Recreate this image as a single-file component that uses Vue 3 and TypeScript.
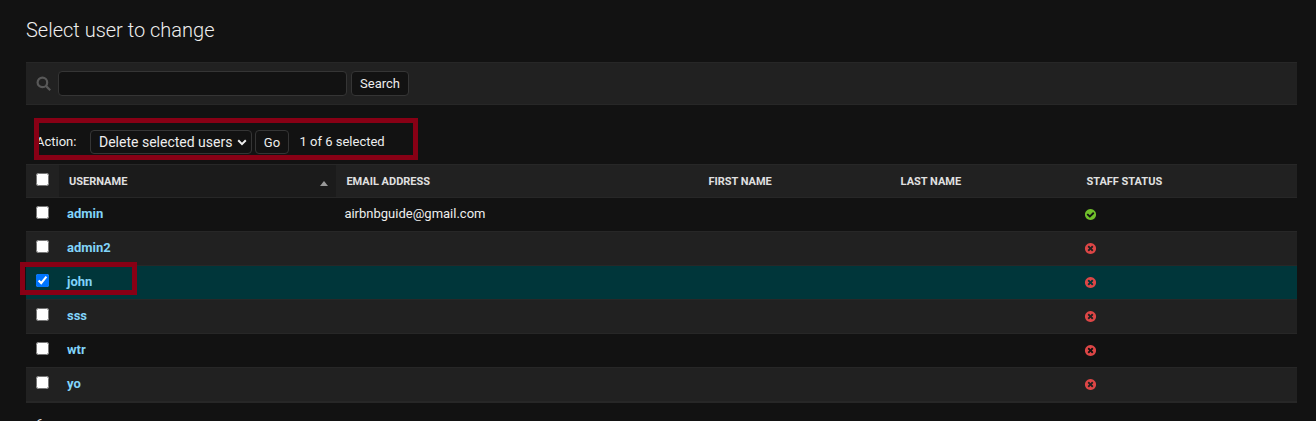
<script setup lang="ts">
import { ref, computed } from 'vue'

interface User {
  username: string
  email: string
  staff: boolean
}

const users: User[] = [
  { username: 'admin', email: 'airbnbguide@gmail.com', staff: true },
  { username: 'admin2', email: '', staff: false },
  { username: 'john', email: '', staff: false },
  { username: 'sss', email: '', staff: false },
  { username: 'wtr', email: '', staff: false },
  { username: 'yo', email: '', staff: false },
]

const query = ref('')
const selected = ref<string[]>(['john'])
const all = computed({
  get: () => selected.value.length === users.length,
  set: (on: boolean) => {
    selected.value = on ? users.map((u) => u.username) : []
  },
})
</script>

<template>
  <main class="page">
    <h1>Select user to change</h1>

    <form class="toolbar" @submit.prevent>
      <svg class="lens" viewBox="0 0 15 15" width="15" height="15">
        <circle cx="6.4" cy="6.4" r="4.8" />
        <path d="M9.9 9.9L14.2 14.2" />
      </svg>
      <input v-model="query" class="query" type="text" />
      <button class="btn search">Search</button>
    </form>

    <div class="actions">
      <span class="label">Action:</span>
      <button class="select" type="button">
        <span>Delete selected users</span>
        <svg viewBox="0 0 10 7" width="10" height="7"><path d="M1.2 1.3L5 5.1L8.8 1.3" /></svg>
      </button>
      <button class="btn go">Go</button>
      <span class="counter">{{ selected.length }} of {{ users.length }} selected</span>
      <div class="mark mark-actions"></div>
    </div>

    <div class="table">
      <div class="row head">
        <div class="cell check"><input v-model="all" type="checkbox" /></div>
        <div class="cell name sorted">
          <span>Username</span>
          <svg class="sort" viewBox="0 0 8 5" width="8" height="5"><path d="M4 0L8 5H0Z" /></svg>
        </div>
        <div class="cell">Email address</div>
        <div class="cell">First name</div>
        <div class="cell">Last name</div>
        <div class="cell">Staff status</div>
      </div>
      <div
        v-for="user in users"
        :key="user.username"
        class="row"
        :class="{ selected: selected.includes(user.username) }"
      >
        <div class="cell check">
          <input v-model="selected" type="checkbox" :value="user.username" />
        </div>
        <div class="cell"><a>{{ user.username }}</a></div>
        <div class="cell">{{ user.email }}</div>
        <div class="cell"></div>
        <div class="cell"></div>
        <div class="cell">
          <svg class="status" viewBox="0 0 1792 1792" width="13" height="13">
            <path
              v-if="user.staff"
              fill="#70bf2b"
              d="M1412 734q0-28-18-46l-91-90q-19-19-45-19t-45 19l-408 407-226-226q-19-19-45-19t-45 19l-91 90q-18 18-18 46 0 27 18 45l362 362q19 19 45 19 27 0 46-19l543-543q18-18 18-45zm252 162q0 209-103 385.500t-279.500 279.500-385.500 103-385.500-103-279.500-279.500-103-385.500 103-385.500 279.500-279.500 385.500-103 385.500 103 279.500 279.500 103 385.500z"
            />
            <path
              v-else
              fill="#dd4646"
              d="M1277 1122q0-26-19-45l-181-181 181-181q19-19 19-45 0-27-19-46l-90-90q-19-19-46-19-26 0-45 19l-181 181-181-181q-19-19-45-19-27 0-46 19l-90 90q-19 19-19 46 0 26 19 45l181 181-181 181q-19 19-19 45 0 27 19 46l90 90q19 19 46 19 26 0 45-19l181-181 181 181q19 19 45 19 27 0 46-19l90-90q19-19 19-46zm387-226q0 209-103 385.500t-279.500 279.500-385.500 103-385.500-103-279.500-279.500-103-385.500 103-385.500 279.500-279.500 385.500-103 385.500 103 279.500 279.500 103 385.500z"
            />
          </svg>
        </div>
        <div v-if="user.username === 'john'" class="mark mark-row"></div>
      </div>
    </div>

    <p class="total">{{ users.length }} users</p>
  </main>
</template>

<style>
body {
  background: #121212;
  overflow: hidden;
}
</style>

<style scoped>
.page {
  box-sizing: border-box;
  height: 421px;
  overflow: hidden;
  padding: 18px 19px 0 26px;
  background: #121212;
  color: #eee;
  font: 13px/17px Roboto, sans-serif;
}
h1 {
  margin: 0 0 20px;
  font-size: 20px;
  line-height: 24px;
  font-weight: 300;
}
input,
button {
  box-sizing: border-box;
  margin: 0;
  font-family: inherit;
  color: #eee;
}
.toolbar {
  box-sizing: border-box;
  display: flex;
  align-items: center;
  height: 43px;
  padding-left: 10px;
  background: #212121;
  border-top: 1px solid #272727;
  border-bottom: 1px solid #272727;
}
.lens {
  margin-right: 7px;
  fill: none;
  stroke: #585858;
  stroke-width: 2.2;
}
.query {
  width: 289px;
  height: 25px;
  margin-right: 4px;
  background: #121212;
  border: 1px solid #353535;
  border-radius: 4px;
}
.btn,
.select {
  padding: 0;
  background: #121212;
  border: 1px solid #353535;
  border-radius: 4px;
  font-size: 13px;
}
.search {
  width: 58px;
  height: 25px;
}
.actions {
  position: relative;
  display: flex;
  align-items: center;
  height: 24px;
  margin: 25px 0 10px;
  padding-left: 10px;
}
.label,
.counter {
  padding-bottom: 2px;
}
.label {
  width: 54px;
}
.select {
  display: flex;
  align-items: center;
  justify-content: space-between;
  width: 162px;
  height: 24px;
  padding: 0 4px 0 8px;
  margin-right: 3px;
  font-size: 14px;
}
.select svg {
  fill: none;
  stroke: #eee;
  stroke-width: 2;
}
.go {
  width: 34px;
  height: 24px;
  margin-right: 10.5px;
}
.mark {
  position: absolute;
  box-sizing: border-box;
  border: 5px solid #880015;
  pointer-events: none;
}
.mark-actions {
  left: 8px;
  top: -12px;
  width: 384px;
  height: 42px;
}
.mark-row {
  left: -6px;
  top: -4px;
  width: 117px;
  height: 33px;
}
.table {
  border-bottom: 2px solid #272727;
}
.row {
  position: relative;
  box-sizing: border-box;
  display: grid;
  grid-template-columns: 33px 277.4px 362px 192.2px 185.8px 1fr;
  height: 34px;
  border-top: 1px solid #272727;
}
.row:nth-child(odd) {
  background: #212121;
}
.row.selected {
  background: #00363a;
}
.row.head {
  height: 33px;
  background: #212121;
  color: #e0e0e0;
  font-size: 11px;
  font-weight: 700;
  text-transform: uppercase;
}
.cell {
  padding: 7px 8px 0;
}
.cell.check {
  padding: 8px 0 0 10px;
}
.check input {
  display: block;
  width: 13px;
  height: 13px;
}
.head .cell {
  padding: 8px 10px 0;
}
.head .cell.sorted {
  display: flex;
  justify-content: space-between;
  padding-right: 8.4px;
  background: #1b1b1b;
}
.sort {
  margin-top: 8px;
  fill: #999;
}
a {
  color: #81d4fa;
  font-weight: 700;
}
.status {
  display: block;
  margin: 3px 0 0 -0.4px;
}
.total {
  margin: 12px 0 0;
  padding-left: 10px;
}
</style>
